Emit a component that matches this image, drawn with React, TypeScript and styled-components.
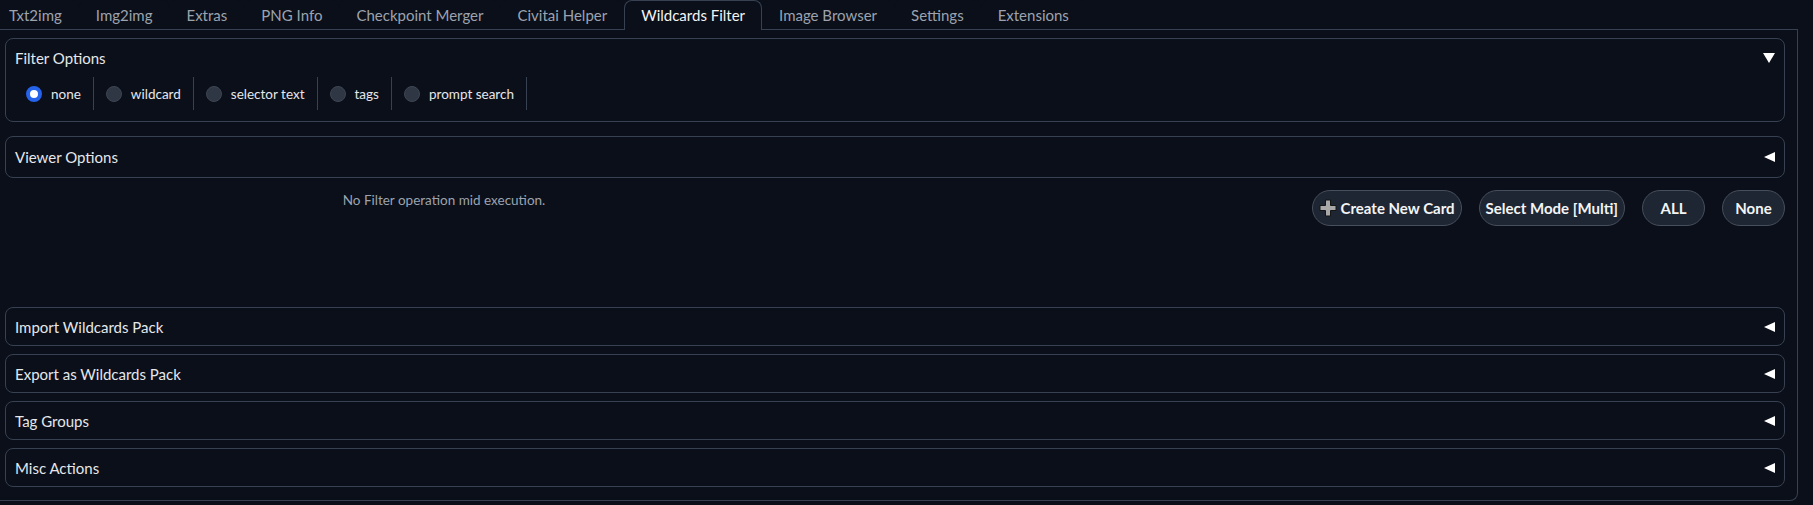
import styled, { createGlobalStyle } from "styled-components";

const GlobalStyle = createGlobalStyle`
  html, body {
    margin: 0;
    padding: 0;
    background-color: #0b0f19;
    overflow: hidden;
  }
  body {
    font-family: Lato, "Liberation Sans", sans-serif;
    color: #e5e7eb;
  }
`;

const Page = styled.div`
  margin-left: -8px;
  width: 1806px;
`;

const TabNav = styled.div`
  display: flex;
  height: 29px;
  border-bottom: 1px solid #374151;
`;

const Tab = styled.div<{ selected?: boolean }>`
  line-height: 29px;
  padding: 0 16px;
  font-size: 15px;
  color: ${(props) => (props.selected ? "#f3f4f6" : "#9ca3af")};
  border: 1px solid ${(props) => (props.selected ? "#374151" : "transparent")};
  border-bottom: none;
  border-radius: 8px 8px 0 0;
  background-color: #0b0f19;
  margin-bottom: ${(props) => (props.selected ? "-1px" : "0")};
  height: ${(props) => (props.selected ? "30px" : "29px")};
  box-sizing: border-box;
  white-space: nowrap;
`;

const TabBody = styled.div`
  border: 1px solid #374151;
  border-top: none;
  border-radius: 0 0 8px 8px;
  padding: 8px 12px 13px;
  display: flex;
  flex-direction: column;
`;

const Panel = styled.div<{ height: number; gapAbove?: number }>`
  border: 1px solid #374151;
  border-radius: 8px;
  box-sizing: border-box;
  height: ${(props) => props.height}px;
  margin-top: ${(props) => props.gapAbove ?? 0}px;
  display: flex;
  flex-direction: column;
`;

const PanelHeader = styled.div<{ height: number }>`
  display: flex;
  align-items: center;
  justify-content: space-between;
  height: ${(props) => props.height}px;
  padding: 0 9px;
  flex-shrink: 0;
`;

const PanelTitle = styled.span`
  font-size: 15px;
  color: #e5e7eb;
`;

const RadioRow = styled.div`
  display: flex;
  height: 33px;
  padding-left: 8px;
`;

const RadioItem = styled.label`
  display: flex;
  align-items: center;
  gap: 9px;
  padding: 0 12px;
  border-right: 1px solid #374151;
  font-size: 13.5px;
  color: #e5e7eb;
`;

const RadioDot = styled.span<{ checked?: boolean }>`
  width: 16px;
  height: 16px;
  border-radius: 50%;
  box-sizing: border-box;
  background-color: ${(props) => (props.checked ? "#ffffff" : "#2f3644")};
  border: ${(props) =>
    props.checked ? "4.5px solid #2563eb" : "1px solid #3f4654"};
`;

const MiddleRow = styled.div`
  display: grid;
  grid-template-columns: 1fr 1fr;
  gap: 12px;
  height: 129px;
  padding-top: 12px;
  box-sizing: border-box;
`;

const StatusText = styled.div`
  text-align: center;
  font-size: 13.5px;
  line-height: 20px;
  color: #9ca3af;
  padding-right: 6px;
`;

const ButtonBar = styled.div`
  display: flex;
  justify-content: flex-end;
  align-items: flex-start;
  gap: 17px;
`;

const PillButton = styled.button`
  display: flex;
  align-items: center;
  justify-content: center;
  gap: 4px;
  height: 36px;
  min-width: 63px;
  padding: 0 6px;
  border-radius: 18px;
  border: 1px solid #474e5c;
  background-color: #1f2633;
  color: #f3f4f6;
  font-family: Lato, "Liberation Sans", sans-serif;
  font-size: 15px;
  font-weight: 700;
  white-space: nowrap;
`;

const AccordionGroup = styled.div`
  display: flex;
  flex-direction: column;
  gap: 8px;
`;

const ArrowDown = () => (
  <svg width="12" height="10" viewBox="0 0 12 10">
    <polygon points="0,0 12,0 6,10" fill="#ffffff" />
  </svg>
);

const ArrowLeft = () => (
  <svg width="11" height="10" viewBox="0 0 11 10">
    <polygon points="0,5 11,0 11,10" fill="#ffffff" />
  </svg>
);

const PlusIcon = () => (
  <svg width="18" height="18" viewBox="0 0 18 18">
    <path
      d="M6.5 1h5v5.5H17v5h-5.5V17h-5v-5.5H1v-5h5.5z"
      fill="#a8a8a8"
      stroke="#141414"
      strokeWidth="1"
    />
  </svg>
);

const tabs = [
  "Txt2img",
  "Img2img",
  "Extras",
  "PNG Info",
  "Checkpoint Merger",
  "Civitai Helper",
  "Wildcards Filter",
  "Image Browser",
  "Settings",
  "Extensions",
];

const filterModes = ["none", "wildcard", "selector text", "tags", "prompt search"];

const closedSections = [
  "Import Wildcards Pack",
  "Export as Wildcards Pack",
  "Tag Groups",
  "Misc Actions",
];

const App = () => {
  return (
    <Page>
      <GlobalStyle />
      <TabNav>
        {tabs.map((tab) => (
          <Tab key={tab} selected={tab === "Wildcards Filter"}>
            {tab}
          </Tab>
        ))}
      </TabNav>
      <TabBody>
        <Panel height={84}>
          <PanelHeader height={38}>
            <PanelTitle>Filter Options</PanelTitle>
            <ArrowDown />
          </PanelHeader>
          <RadioRow>
            {filterModes.map((mode) => (
              <RadioItem key={mode}>
                <RadioDot checked={mode === "none"} />
                {mode}
              </RadioItem>
            ))}
          </RadioRow>
        </Panel>
        <Panel height={42} gapAbove={14}>
          <PanelHeader height={40}>
            <PanelTitle>Viewer Options</PanelTitle>
            <ArrowLeft />
          </PanelHeader>
        </Panel>
        <MiddleRow>
          <StatusText>No Filter operation mid execution.</StatusText>
          <ButtonBar>
            <PillButton>
              <PlusIcon />
              Create New Card
            </PillButton>
            <PillButton>Select Mode [Multi]</PillButton>
            <PillButton>ALL</PillButton>
            <PillButton>None</PillButton>
          </ButtonBar>
        </MiddleRow>
        <AccordionGroup>
          {closedSections.map((title) => (
            <Panel key={title} height={39}>
              <PanelHeader height={37}>
                <PanelTitle>{title}</PanelTitle>
                <ArrowLeft />
              </PanelHeader>
            </Panel>
          ))}
        </AccordionGroup>
      </TabBody>
    </Page>
  );
};

export default App;
